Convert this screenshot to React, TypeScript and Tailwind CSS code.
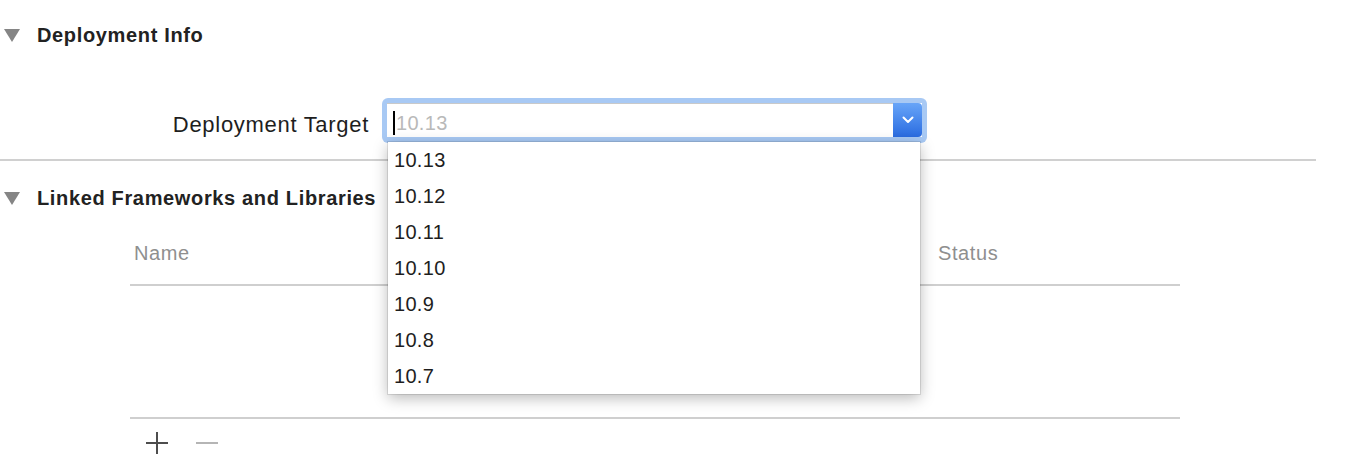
import { useState } from 'react';

const VERSIONS = ['10.13', '10.12', '10.11', '10.10', '10.9', '10.8', '10.7'];

const font = "font-['Helvetica_Neue','Liberation_Sans',Arial,sans-serif]";

const Disclosure = () => (
  <svg width="16" height="13" viewBox="0 0 16 13" className="shrink-0">
    <polygon points="0,0 16,0 8,13" fill="#858585" />
  </svg>
);

const SectionHeader = ({ title }: { title: string }) => (
  <div className="flex items-center gap-[17px] pl-[4px]">
    <Disclosure />
    <span className="text-[20px] font-bold tracking-[0.65px] text-[#222]">{title}</span>
  </div>
);

const Chevron = () => (
  <svg width="12" height="8" viewBox="0 0 12 8">
    <path d="M1.5 1.5 L6 6 L10.5 1.5" fill="none" stroke="white" strokeWidth="2" strokeLinecap="round" strokeLinejoin="round" />
  </svg>
);

const ComboBox = () => {
  const [selected] = useState(VERSIONS[0]);
  return (
    <div className="relative">
      <div className="w-[545px] rounded-[6px] bg-[#a8c9f4] p-[5px] pb-[6px]">
        <div className="flex h-[34px] bg-white">
          <div className="flex flex-1 items-center border-t border-[#c9c9c9] pt-[4px] pl-[6px]">
            <span className="mr-[1px] h-[24px] w-[2px] bg-black" />
            <span className="text-[20px] tracking-[0.3px] text-[#b9b9b9]">{selected}</span>
          </div>
          <div className="flex w-[29px] items-center justify-center rounded-r-[4px] bg-gradient-to-b from-[#68a5f8] to-[#2a6be0]">
            <Chevron />
          </div>
        </div>
      </div>
      <ul className="absolute top-[44px] left-[6px] z-10 w-[532px] bg-white shadow-[0_4px_14px_rgba(0,0,0,0.28)] ring-1 ring-black/10">
        {VERSIONS.map((v) => (
          <li key={v} className="flex h-[36px] items-center pl-[6px] text-[20px] tracking-[0.3px] text-[#1e1e1e]">
            {v}
          </li>
        ))}
      </ul>
    </div>
  );
};

export default function App() {
  return (
    <div className={`h-[460px] w-[1346px] overflow-hidden bg-white ${font}`}>
      <div className="pt-[20px]">
        <SectionHeader title="Deployment Info" />
      </div>

      <div className="mt-[48px] flex items-center gap-[13px]">
        <div className="w-[369px] pt-[7px] text-right text-[22px] tracking-[0.7px] text-[#1e1e1e]">Deployment Target</div>
        <ComboBox />
      </div>

      <div className="mt-[16px] h-[2px] w-[1316px] bg-[#d0d0d0]" />

      <div className="pt-[22px]">
        <SectionHeader title="Linked Frameworks and Libraries" />
      </div>

      <div className="ml-[130px] w-[1050px] pt-[24px]">
        <div className="flex h-[49px] items-center border-b-2 border-[#cfcfcf] pb-[15px] text-[20px] tracking-[0.6px] text-[#8f8f8f]">
          <span className="w-[808px] pl-[4px]">Name</span>
          <span>Status</span>
        </div>
        <div className="h-[133px] border-b-2 border-[#cfcfcf]" />
        <div className="flex items-center gap-[28px] pt-[13px] pl-[16px]">
          <svg width="22" height="22" viewBox="0 0 22 22">
            <path d="M11 0 V22 M0 11 H22" stroke="#4d4d4d" strokeWidth="2" />
          </svg>
          <svg width="22" height="22" viewBox="0 0 22 22">
            <path d="M0 11 H22" stroke="#b5b5b5" strokeWidth="2" />
          </svg>
        </div>
      </div>
    </div>
  );
}
